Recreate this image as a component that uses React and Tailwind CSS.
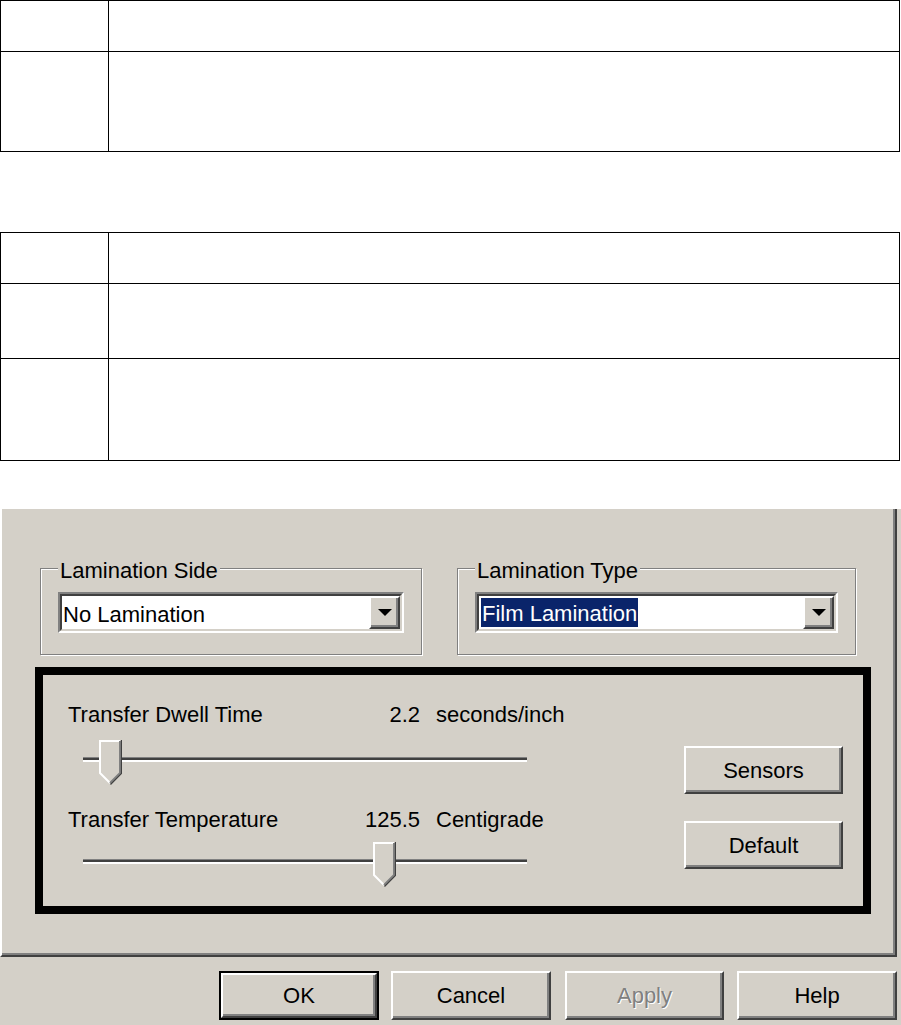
import React from 'react';

const GRAY = 'bg-[#d4d0c8]';

const Table = ({ rows }) => (
    <div className="w-[900px] border border-black">
        {rows.map((h, i) => (
            <div
                key={i}
                className={`flex ${i < rows.length - 1 ? 'border-b border-black' : ''}`}
                style={{ height: h }}
            >
                <div className="w-[108px] border-r border-black" />
                <div className="flex-1" />
            </div>
        ))}
    </div>
);

const DropButton = () => (
    <div className="w-[31px] h-full bg-[#d4d0c8] border-2 border-t-white border-l-white border-b-[#404040] border-r-[#404040] shadow-[inset_-2px_-2px_0_#808080] flex items-center justify-center">
        <svg width="14" height="8" viewBox="0 0 14 8">
            <polygon points="0,0 14,0 7,7" fill="#000" />
        </svg>
    </div>
);

const Combo = ({ children }) => (
    <div className="h-[41px] border-2 border-t-[#808080] border-l-[#808080] border-b-white border-r-white">
        <div className="h-full flex items-center bg-white border-2 border-t-[#404040] border-l-[#404040] border-b-[#d4d0c8] border-r-[#d4d0c8]">
            <div className="flex-1 flex items-center">{children}</div>
            <DropButton />
        </div>
    </div>
);

const Group = ({ label, width, children }) => (
    <fieldset
        className="border border-[#808080] shadow-[inset_1px_1px_0_#fff,1px_1px_0_#fff] px-[17px] pt-[11px] pb-[21px]"
        style={{ width }}
    >
        <legend className="px-[2px] leading-[25px] bg-[#d4d0c8]">
            <span className="relative top-[2px]">{label}</span>
        </legend>
        {children}
    </fieldset>
);

const Thumb = ({ left }) => (
    <svg
        className="absolute top-0"
        style={{ left }}
        width="23"
        height="45"
        viewBox="0 0 23 45"
    >
        <polygon points="0,0 22,0 22,33 11,44 0,33" fill="#d4d0c8" />
        <polyline points="11,43 1,33 1,1 21,1" fill="none" stroke="#fff" strokeWidth="2" />
        <polyline points="21,1 21,33 11,43" fill="none" stroke="#808080" strokeWidth="2" />
        <polyline points="22.5,0 22.5,33.5 11.5,44.5" fill="none" stroke="#404040" strokeWidth="1.2" />
    </svg>
);

const Slider = ({ thumb }) => (
    <div className="relative ml-[40px] w-[444px] h-[45px]">
        <div className="absolute left-0 right-0 top-[17px] h-[5px] border-t border-t-[#808080] border-b-2 border-b-white bg-[#404040]" />
        <Thumb left={thumb} />
    </div>
);

const Row = ({ label, value, unit }) => (
    <div className="flex items-center h-[25px] pl-[25px]">
        <span className="w-[290px]">{label}</span>
        <span className="w-[62px] text-right">{value}</span>
        <span className="ml-[16px]">{unit}</span>
    </div>
);

const WinButton = ({ children, className = '', disabled, isDefault }) => {
    const inner = (
        <div className="h-full flex items-center justify-center bg-[#d4d0c8] border-2 border-t-white border-l-white border-b-[#404040] border-r-[#404040] shadow-[inset_-2px_-2px_0_#808080]">
            <span
                className={disabled ? 'text-[#808080] [text-shadow:1px_1px_0_#fff]' : 'text-black'}
            >
                {children}
            </span>
        </div>
    );
    if (isDefault) {
        return <div className={`border-2 border-black ${className}`}>{inner}</div>;
    }
    return <div className={className}>{inner}</div>;
};

export default function App() {
    return (
        <div
            className="w-[901px] h-[1025px] bg-white overflow-hidden text-[22px] text-black"
            style={{ fontFamily: '"Liberation Sans", Arial, sans-serif' }}
        >
            <Table rows={[51, 99]} />
            <div className="mt-[80px]">
                <Table rows={[51, 75, 101]} />
            </div>

            {/* dialog */}
            <div className={`mt-[48px] h-[516px] ${GRAY}`}>
                <div className="w-[897px] h-[448px] border-l-2 border-l-white border-r-2 border-r-[#404040] border-b-2 border-b-[#404040] shadow-[inset_-2px_-2px_0_#808080]">
                    <div className="flex pt-[47px] pl-[38px] gap-[35px]">
                        <Group label="Lamination Side" width={382}>
                            <Combo>
                                <span className="pl-[1px] relative top-[2px]">No Lamination</span>
                            </Combo>
                        </Group>
                        <Group label="Lamination Type" width={399}>
                            <Combo>
                                <span className="ml-[2px] px-[1px] h-[29px] leading-[31px] bg-[#0a246a] text-white">
                                    Film Lamination
                                </span>
                            </Combo>
                        </Group>
                    </div>

                    <div className="mt-[12px] ml-[33px] w-[836px] h-[247px] border-8 border-black flex">
                        <div className="flex-1 pt-[27px]">
                            <Row label="Transfer Dwell Time" value="2.2" unit="seconds/inch" />
                            <div className="mt-[13px]">
                                <Slider thumb={16} />
                            </div>
                            <div className="mt-[22px]">
                                <Row label="Transfer Temperature" value="125.5" unit="Centigrade" />
                            </div>
                            <div className="mt-[10px]">
                                <Slider thumb={290} />
                            </div>
                        </div>
                        <div className="w-[159px] mr-[20px] pt-[71px] flex flex-col gap-[27px]">
                            <WinButton className="h-[48px]">Sensors</WinButton>
                            <WinButton className="h-[48px]">Default</WinButton>
                        </div>
                    </div>
                </div>

                <div className="flex pt-[14px] pl-[219px]">
                    <WinButton isDefault className="w-[160px] h-[49px]">OK</WinButton>
                    <WinButton className="ml-[12px] w-[160px] h-[49px]">Cancel</WinButton>
                    <WinButton disabled className="ml-[14px] w-[159px] h-[49px]">Apply</WinButton>
                    <WinButton className="ml-[13px] w-[160px] h-[49px]">Help</WinButton>
                </div>
            </div>
        </div>
    );
}
